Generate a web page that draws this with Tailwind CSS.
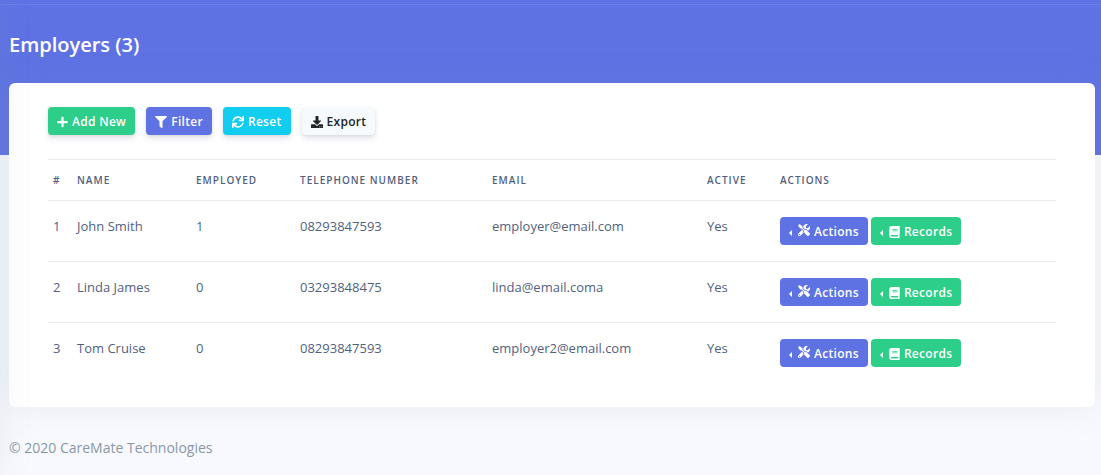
<!DOCTYPE html>
<html lang="en">
<head>
  <meta charset="UTF-8">
  <meta name="viewport" content="width=device-width, initial-scale=1">
  <title>Employers - CareMate</title>
  <script src="https://cdn.jsdelivr.net/npm/@tailwindcss/browser@4"></script>
</head>
<body class="bg-[#f8f9fe] font-['Open_Sans',sans-serif] text-[#525f7f] min-h-screen overflow-x-hidden">

  <!-- Icons -->
  <svg class="hidden">
    <symbol id="plus" viewBox="0 0 448 512"><path d="M416 208H272V64c0-17.67-14.33-32-32-32h-32c-17.67 0-32 14.33-32 32v144H32c-17.67 0-32 14.33-32 32v32c0 17.67 14.33 32 32 32h144v144c0 17.67 14.33 32 32 32h32c17.67 0 32-14.33 32-32V304h144c17.67 0 32-14.33 32-32v-32c0-17.67-14.33-32-32-32z"/></symbol>
    <symbol id="filter" viewBox="0 0 512 512"><path d="M487.976 0H24.028C2.71 0-8.047 25.866 7.058 40.971L192 225.941V432c0 7.831 3.821 15.17 10.237 19.662l80 55.98C298.02 518.69 320 507.493 320 487.98V225.941l184.947-184.97C520.021 25.896 509.338 0 487.976 0z"/></symbol>
    <symbol id="sync" viewBox="0 0 512 512"><path d="M440.65 12.57l4 82.77A247.16 247.16 0 0 0 255.83 8C134.73 8 33.91 94.92 12.29 209.82A12 12 0 0 0 24.09 224h49.05a12 12 0 0 0 11.67-9.26 175.91 175.91 0 0 1 317-56.94l-101.46-4.86a12 12 0 0 0-12.57 12v47.41a12 12 0 0 0 12 12H500a12 12 0 0 0 12-12V12a12 12 0 0 0-12-12h-47.37a12 12 0 0 0-11.98 12.57zM255.83 432a175.61 175.61 0 0 1-146-77.8l101.8 4.87a12 12 0 0 0 12.57-12v-47.4a12 12 0 0 0-12-12H12a12 12 0 0 0-12 12V500a12 12 0 0 0 12 12h47.35a12 12 0 0 0 12-12.6l-4.15-82.57A247.17 247.17 0 0 0 255.83 504c121.11 0 221.93-86.92 243.55-201.82a12 12 0 0 0-11.8-14.18h-49.05a12 12 0 0 0-11.67 9.26A175.86 175.86 0 0 1 255.83 432z"/></symbol>
    <symbol id="download" viewBox="0 0 512 512"><path d="M216 0h80c13.3 0 24 10.7 24 24v168h87.7c17.8 0 26.7 21.5 14.1 34.1L269.7 378.3c-7.5 7.5-19.8 7.5-27.3 0L90.1 226.1c-12.6-12.6-3.7-34.1 14.1-34.1H192V24c0-13.3 10.7-24 24-24zm296 376v112c0 13.3-10.7 24-24 24H24c-13.3 0-24-10.7-24-24V376c0-13.3 10.7-24 24-24h146.7l49 49c20.1 20.1 52.5 20.1 72.6 0l49-49H488c13.3 0 24 10.7 24 24zm-124 88c0-11-9-20-20-20s-20 9-20 20 9 20 20 20 20-9 20-20zm64 0c0-11-9-20-20-20s-20 9-20 20 9 20 20 20 20-9 20-20z"/></symbol>
    <symbol id="tools" viewBox="0 0 512 512"><path d="M501.1 395.7L384 278.6c-23.1-23.1-57.6-27.6-85.4-13.9L192 158.1V96L64 0 0 64l96 128h62.1l106.6 106.6c-13.6 27.8-9.2 62.3 13.9 85.4l117.1 117.1c14.6 14.6 38.2 14.6 52.7 0l52.7-52.7c14.5-14.6 14.5-38.2 0-52.7zM331.7 225c28.3 0 54.9 11 74.9 31l19.4 19.4c15.8-6.9 30.8-16.5 43.8-29.5 37.1-37.1 49.7-89.3 37.9-136.7-2.2-9-13.5-12.1-20.1-5.5l-74.4 74.4-67.9-11.3L334 98.9l74.4-74.4c6.6-6.6 3.4-17.9-5.7-20.2-47.4-11.7-99.6.9-136.6 37.9-28.5 28.5-41.9 66.1-41.2 103.6l82.1 82.1c8.1-1.9 16.5-2.9 24.7-2.9zm-103.9 82l-56.7-56.7L18.7 402.8c-25 25-25 65.5 0 90.5s65.5 25 90.5 0l123.6-123.6c-7.6-19.9-9.9-41.6-5-62.7zM64 472c-13.2 0-24-10.8-24-24 0-13.3 10.7-24 24-24s24 10.7 24 24c0 13.2-10.7 24-24 24z"/></symbol>
    <symbol id="book" viewBox="0 0 448 512"><path d="M448 360V24c0-13.3-10.7-24-24-24H96C43 0 0 43 0 96v320c0 53 43 96 96 96h328c13.3 0 24-10.7 24-24v-16c0-7.5-3.5-14.3-8.9-18.7-4.2-15.4-4.2-59.3 0-74.7 5.4-4.3 8.9-11.1 8.9-18.6zM128 134c0-3.3 2.7-6 6-6h212c3.3 0 6 2.7 6 6v20c0 3.3-2.7 6-6 6H134c-3.3 0-6-2.7-6-6v-20zm0 64c0-3.3 2.7-6 6-6h212c3.3 0 6 2.7 6 6v20c0 3.3-2.7 6-6 6H134c-3.3 0-6-2.7-6-6v-20zm253.4 250H96c-17.7 0-32-14.3-32-32 0-17.6 14.4-32 32-32h285.4c-1.9 17.1-1.9 46.9 0 64z"/></symbol>
    <symbol id="caret" viewBox="0 0 3 6"><path d="M3 0v6L0 3z"/></symbol>
  </svg>

  <!-- Edge of the collapsed side menu -->
  <div class="fixed inset-y-0 -left-16 w-16 z-10 shadow-[0_0_32px_rgba(136,152,170,0.15)]"></div>

  <!-- Header -->
  <header class="bg-[#5e72e4] pt-1 pb-[92px]">
    <div class="border-t border-white/10 pt-[22px] px-[9px]">
      <h1 class="text-white text-xl leading-9 font-semibold">Employers (3)</h1>
    </div>
  </header>

  <!-- Employers card -->
  <main class="-mt-[72px] ml-[9px] mr-[6px] relative bg-white rounded-md px-[39px] pt-6 pb-6 shadow-[0_0_32px_rgba(136,152,170,0.15)]">
    <div class="flex flex-wrap gap-[11px] mb-6 text-xs font-semibold tracking-wide text-white">
      <button type="button" class="flex items-center gap-1 h-7 px-[9px] pt-[2px] rounded bg-[#2dce89] shadow-[0_4px_6px_rgba(50,50,93,0.11),0_1px_3px_rgba(0,0,0,0.08)]">
        <svg class="w-[11px] h-3 fill-current"><use href="#plus"/></svg>Add New
      </button>
      <button type="button" class="flex items-center gap-1 h-7 px-[9px] pt-[2px] rounded bg-[#5e72e4] shadow-[0_4px_6px_rgba(50,50,93,0.11),0_1px_3px_rgba(0,0,0,0.08)]">
        <svg class="size-3 fill-current"><use href="#filter"/></svg>Filter
      </button>
      <button type="button" class="flex items-center gap-1 h-7 px-[9px] pt-[2px] rounded bg-[#11cdef] shadow-[0_4px_6px_rgba(50,50,93,0.11),0_1px_3px_rgba(0,0,0,0.08)]">
        <svg class="size-3 fill-current"><use href="#sync"/></svg>Reset
      </button>
      <button type="button" class="flex items-center gap-1 h-7 px-[9px] pt-[2px] rounded bg-[#f7fafc] text-[#212529] shadow-[0_4px_6px_rgba(50,50,93,0.11),0_1px_3px_rgba(0,0,0,0.08)]">
        <svg class="size-3 fill-current"><use href="#download"/></svg>Export
      </button>
    </div>

    <table class="w-full table-fixed text-left text-[13px] leading-[18px]">
      <colgroup>
        <col class="w-6">
        <col class="w-[119px]">
        <col class="w-[104px]">
        <col class="w-48">
        <col class="w-[215px]">
        <col class="w-[73px]">
        <col>
      </colgroup>
      <thead class="text-[10px] uppercase tracking-widest">
        <tr class="border-y border-[#e9ecef]">
          <th class="h-[41px] pl-[5px] font-semibold">#</th>
          <th class="pl-[5px] font-semibold">Name</th>
          <th class="pl-[5px] font-semibold">Employed</th>
          <th class="pl-[5px] font-semibold">Telephone Number</th>
          <th class="pl-[5px] font-semibold">Email</th>
          <th class="pl-[5px] font-semibold">Active</th>
          <th class="pl-[5px] font-semibold">Actions</th>
        </tr>
      </thead>
      <tbody class="divide-y divide-[#e9ecef] align-top">
        <tr>
          <td class="py-4 pl-[5px]">1</td>
          <td class="py-4 pl-[5px]">John Smith</td>
          <td class="py-4 pl-[5px]">1</td>
          <td class="py-4 pl-[5px]">08293847593</td>
          <td class="py-4 pl-[5px]">employer@email.com</td>
          <td class="py-4 pl-[5px]">Yes</td>
          <td class="py-4 pl-[5px]">
            <div class="flex gap-[3px] text-xs font-semibold tracking-wide text-white">
              <button type="button" class="flex items-center gap-1 h-7 px-[9px] pt-[2px] rounded bg-[#5e72e4]">
                <svg class="w-[3px] h-[6px] mt-[2px] mr-[2px] fill-current"><use href="#caret"/></svg>
                <svg class="size-3 mb-1 fill-current"><use href="#tools"/></svg>Actions
              </button>
              <button type="button" class="flex items-center gap-1 h-7 px-[9px] pt-[2px] rounded bg-[#2dce89]">
                <svg class="w-[3px] h-[6px] mt-[2px] mr-[2px] fill-current"><use href="#caret"/></svg>
                <svg class="w-[11px] h-3 fill-current"><use href="#book"/></svg>Records
              </button>
            </div>
          </td>
        </tr>
        <tr>
          <td class="py-4 pl-[5px]">2</td>
          <td class="py-4 pl-[5px]">Linda James</td>
          <td class="py-4 pl-[5px]">0</td>
          <td class="py-4 pl-[5px]">03293848475</td>
          <td class="py-4 pl-[5px]">linda@email.coma</td>
          <td class="py-4 pl-[5px]">Yes</td>
          <td class="py-4 pl-[5px]">
            <div class="flex gap-[3px] text-xs font-semibold tracking-wide text-white">
              <button type="button" class="flex items-center gap-1 h-7 px-[9px] pt-[2px] rounded bg-[#5e72e4]">
                <svg class="w-[3px] h-[6px] mt-[2px] mr-[2px] fill-current"><use href="#caret"/></svg>
                <svg class="size-3 mb-1 fill-current"><use href="#tools"/></svg>Actions
              </button>
              <button type="button" class="flex items-center gap-1 h-7 px-[9px] pt-[2px] rounded bg-[#2dce89]">
                <svg class="w-[3px] h-[6px] mt-[2px] mr-[2px] fill-current"><use href="#caret"/></svg>
                <svg class="w-[11px] h-3 fill-current"><use href="#book"/></svg>Records
              </button>
            </div>
          </td>
        </tr>
        <tr>
          <td class="py-4 pl-[5px]">3</td>
          <td class="py-4 pl-[5px]">Tom Cruise</td>
          <td class="py-4 pl-[5px]">0</td>
          <td class="py-4 pl-[5px]">08293847593</td>
          <td class="py-4 pl-[5px]">employer2@email.com</td>
          <td class="py-4 pl-[5px]">Yes</td>
          <td class="py-4 pl-[5px]">
            <div class="flex gap-[3px] text-xs font-semibold tracking-wide text-white">
              <button type="button" class="flex items-center gap-1 h-7 px-[9px] pt-[2px] rounded bg-[#5e72e4]">
                <svg class="w-[3px] h-[6px] mt-[2px] mr-[2px] fill-current"><use href="#caret"/></svg>
                <svg class="size-3 mb-1 fill-current"><use href="#tools"/></svg>Actions
              </button>
              <button type="button" class="flex items-center gap-1 h-7 px-[9px] pt-[2px] rounded bg-[#2dce89]">
                <svg class="w-[3px] h-[6px] mt-[2px] mr-[2px] fill-current"><use href="#caret"/></svg>
                <svg class="w-[11px] h-3 fill-current"><use href="#book"/></svg>Records
              </button>
            </div>
          </td>
        </tr>
      </tbody>
    </table>
  </main>

  <!-- Footer -->
  <footer class="relative px-[9px] pt-[31px] pb-4 text-sm text-[#8898aa]">
    &copy; 2020 CareMate Technologies
  </footer>

</body>
</html>
